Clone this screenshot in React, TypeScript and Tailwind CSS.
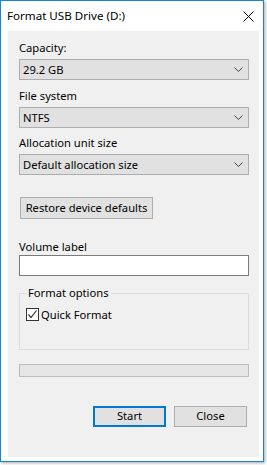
import React from 'react'

function Chevron() {
  return (
    <svg width="9" height="5" viewBox="0 0 9 5" className="shrink-0">
      <polyline points="0.5,0.5 4.5,4.5 8.5,0.5" fill="none" stroke="#404040" strokeWidth="1" />
    </svg>
  )
}

function Dropdown({ value }: { value: string }) {
  return (
    <div className="flex items-center justify-between h-[21px] w-[230px] border border-[#adadad] bg-[#e1e1e1] pl-[3px] pr-[5px]">
      <span className="leading-none">{value}</span>
      <Chevron />
    </div>
  )
}

export default function App() {
  return (
    <div
      className="w-[267px] h-[465px] bg-white text-[11.2px] text-black"
      style={{ fontFamily: '"Segoe UI", "Noto Sans", sans-serif' }}
    >
      <div className="w-[264px] h-[462px] border border-[#1883d7] bg-white flex flex-col shadow-[1px_1px_3px_rgba(0,0,0,0.35)]">
        {/* Title bar */}
        <div className="h-[30px] flex items-center justify-between pl-[6px] pr-[9px]">
          <span className="text-[11.6px]">Format USB Drive (D:)</span>
          <svg width="11" height="11" viewBox="0 0 11 11">
            <line x1="0.5" y1="0.5" x2="10.5" y2="10.5" stroke="#000" strokeWidth="1" />
            <line x1="10.5" y1="0.5" x2="0.5" y2="10.5" stroke="#000" strokeWidth="1" />
          </svg>
        </div>

        {/* Client area */}
        <div className="flex-1 ml-[7px] mr-[4px] mb-[4px] bg-[#f0f0f0] pl-[11px] pr-[10px] pt-[9px] flex flex-col">
          <div className="h-[15px] leading-[15px]">Capacity:</div>
          <div className="mt-[4px]">
            <Dropdown value="29.2 GB" />
          </div>

          <div className="mt-[8px] h-[15px] leading-[15px]">File system</div>
          <div className="mt-[4px]">
            <Dropdown value="NTFS" />
          </div>

          <div className="mt-[7px] h-[15px] leading-[15px]">Allocation unit size</div>
          <div className="mt-[4px]">
            <Dropdown value="Default allocation size" />
          </div>

          <button className="mt-[22px] ml-[1px] w-[133px] h-[22px] border border-[#adadad] bg-[#e1e1e1] text-[11.2px] flex items-center justify-center">
            Restore device defaults
          </button>

          <div className="mt-[20px] h-[15px] leading-[15px]">Volume label</div>
          <div className="mt-[1px] w-[230px] h-[21px] border border-[#7a7a7a] bg-white" />

          {/* Format options group */}
          <div className="relative mt-[17px] w-[230px] h-[57px] border border-[#dcdcdc]">
            <span className="absolute left-[6px] top-[-9px] bg-[#f0f0f0] px-[2px] leading-[15px]">Format options</span>
            <div className="flex items-center mt-[13px] ml-[6px] gap-[2px]">
              <div className="w-[13px] h-[13px] border border-[#333333] bg-white flex items-center justify-center">
                <svg width="11" height="11" viewBox="0 0 11 11">
                  <polyline points="1.5,5.5 4,8.5 9.5,1.5" fill="none" stroke="#333333" strokeWidth="1.2" />
                </svg>
              </div>
              <span className="leading-[15px]">Quick Format</span>
            </div>
          </div>

          {/* Progress bar */}
          <div className="mt-[14px] w-[230px] h-[13px] border border-[#bcbcbc] bg-[#e6e6e6]" />

          {/* Buttons */}
          <div className="mt-[29px] flex justify-end gap-[8px] pr-[2px]">
            <button className="w-[73px] h-[21px] border-2 border-[#0078d7] bg-[#e1e1e1] text-[11.2px] flex items-center justify-center">
              Start
            </button>
            <button className="w-[73px] h-[21px] border border-[#adadad] bg-[#e1e1e1] text-[11.2px] flex items-center justify-center">
              Close
            </button>
          </div>
        </div>
      </div>
    </div>
  )
}
